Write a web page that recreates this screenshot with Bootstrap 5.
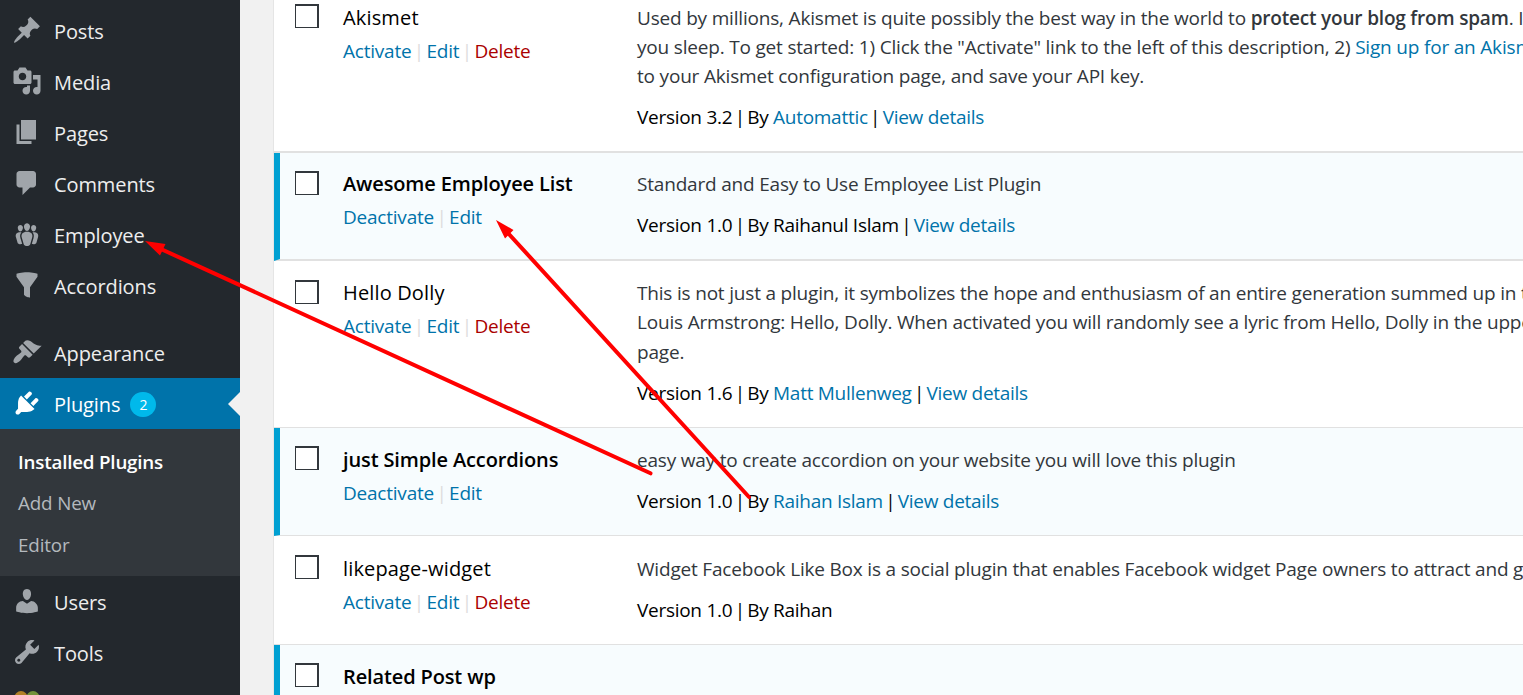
<!DOCTYPE html>
<html lang="en">
<head>
<meta charset="utf-8">
<title>Plugins</title>
<link href="https://cdn.jsdelivr.net/npm/bootstrap@5.3.0/dist/css/bootstrap.min.css" rel="stylesheet">
<style>
body{background:#f1f1f1;font-family:"Open Sans",sans-serif;font-size:19px;line-height:29.25px;color:#000;height:695px;overflow:hidden;letter-spacing:-.22px}
a{color:#0073aa;text-decoration:none}
.side{width:240px;height:695px;background:#23282d;padding-top:6px;overflow:hidden}
.side .item{height:51px;padding-left:12px;gap:12px;color:#eee;font-size:20px;letter-spacing:-.1px;flex:none}
.side .low{padding-top:2px}
.side svg.ico{width:30px;height:30px;fill:#a0a5aa;flex:none;margin-top:-3px}
.side .current{background:#0073aa;color:#fff}
.side .current svg.ico{fill:#fff}
.side .current::after{content:"";position:absolute;right:0;top:14px;border:12px solid transparent;border-left:0;border-right-color:#f1f1f1}
.gap-row{height:15px;flex:none}
.count{width:26px;height:25px;border-radius:13px;background:#00b9eb;font-size:14px;line-height:25px;margin-left:-2px}
.submenu{height:147px;background:#32373c;padding:13px 18px 0;flex:none}
.submenu a{display:block;height:41.4px;line-height:41.4px;color:#b4b9be;font-size:18.8px;letter-spacing:-.15px}
.submenu a.on{color:#fff;font-weight:600;letter-spacing:-.2px}
.plugins{margin-left:33px;border-left:1px solid #e5e5e5;background:#fff;height:695px;overflow:hidden;min-width:0}
.plug{height:108px;padding:17px 0 0 21px;border-bottom:1px solid #e1e1e1;white-space:nowrap;flex:none}
.plug.tall{height:167px}
.plug.first{margin-top:-14px}
.first .desc{margin-top:-.5px}
.plug.edge{border-bottom-width:2px}
.plug.active{background:#f7fcfe;border-left:6px solid #00a0d2;padding-left:15px}
.plug.up{padding-top:16px}
.plug.down{padding-top:18px;height:109px}
.box{width:24px;height:24px;border:2px solid #32373c;border-width:2px 2px 1px 1px;background:#fff;margin-top:1px;flex:none}
.up .box,.dolly .box{margin-top:2px}
.who{width:294px;margin-left:24px;flex:none}
.info{padding-top:1px}
.title{font-size:20px;letter-spacing:.15px}
.active .title{font-weight:600;letter-spacing:-.13px}
.acts{margin-top:4.6px;color:#ddd}
.bar{margin:0 -2.3px}
.del{color:#a00}
.desc{color:#32373c;letter-spacing:-.19px}
.ver{margin-top:12px;letter-spacing:-.28px}
.marks{left:0;top:0;pointer-events:none}
</style>
</head>
<body>
<div class="d-flex">
<nav class="side d-flex flex-column flex-shrink-0">
<div class="item d-flex align-items-center"><svg class="ico" viewBox="0 0 20 20"><path d="M10.44 3.02l1.82-1.82 6.36 6.35-1.83 1.82c-1.05-.68-2.48-.57-3.41.36l-.75.75c-.92.93-1.04 2.35-.35 3.41l-1.83 1.82-2.41-2.41-2.8 2.79c-.42.42-3.38 2.71-3.8 2.29s1.86-3.39 2.28-3.81l2.79-2.79L4.1 9.36l1.83-1.82c1.05.69 2.48.57 3.4-.36l.75-.75c.93-.92 1.05-2.35.36-3.41z"/></svg><span>Posts</span></div>
<div class="item d-flex align-items-center"><svg class="ico" viewBox="0 0 20 20"><path d="M13 11V4c0-.55-.45-1-1-1h-1.67L9 1H5L3.67 3H2c-.55 0-1 .45-1 1v7c0 .55.45 1 1 1h10c.55 0 1-.45 1-1zM7 4.5c1.38 0 2.5 1.12 2.5 2.5S8.38 9.500 7 9.500 4.500 8.380 4.500 7 5.620 4.500 7 4.500zM14 6h5v10.500c0 1.380-1.120 2.500-2.500 2.500S14 17.880 14 16.500s1.120-2.500 2.500-2.500c.17 0 .34.02.5.05V9h-3V6zm-4 8.050V13h2v3.500c0 1.380-1.120 2.500-2.500 2.500S7 17.880 7 16.500 8.120 14 9.500 14c.17 0 .34.02.5.05z"/></svg><span>Media</span></div>
<div class="item d-flex align-items-center"><svg class="ico" viewBox="0 0 20 20"><path d="M6 15V2h10v13H6zm-1 1h8v2H3V5h2v11z"/></svg><span>Pages</span></div>
<div class="item d-flex align-items-center"><svg class="ico" viewBox="0 0 20 20"><path d="M5 2h9c1.100 0 2 .9 2 2v7c0 1.100-.9 2-2 2h-2l-5 5v-5H5c-1.100 0-2-.9-2-2V4c0-1.100.9-2 2-2z"/></svg><span>Comments</span></div>
<div class="item d-flex align-items-center"><svg class="ico" viewBox="0 0 20 20"><path d="M8.030 4.460c-.29 1.280.55 3.460 1.970 3.460 1.410 0 2.250-2.180 1.960-3.460-.22-.98-1.080-1.630-1.960-1.630-.89 0-1.740.65-1.970 1.630zm-4.130.9c-.25 1.080.47 2.930 1.670 2.930s1.920-1.850 1.670-2.930c-.19-.83-.92-1.390-1.670-1.390s-1.480.56-1.670 1.390zm8.860 0c-.25 1.080.47 2.930 1.660 2.930 1.200 0 1.920-1.850 1.670-2.930-.19-.83-.92-1.390-1.670-1.390-.74 0-1.470.56-1.660 1.390zm-.59 11.430l1.250-4.300C14.200 10 12.710 8.470 10 8.470c-2.720 0-4.210 1.530-3.440 4.020l1.260 4.300C8.050 17.510 9 18 10 18c.98 0 1.940-.49 2.170-1.210zm-6.100-7.630c-.49.67-.96 1.830-.42 3.590l1.120 3.790c-.34.2-.77.31-1.200.31-.85 0-1.650-.41-1.850-1.030l-1.070-3.650c-.65-2.110.61-3.400 2.920-3.400.27 0 .54.02.79.06-.1.1-.2.22-.29.33zm8.350-.39c2.310 0 3.580 1.290 2.920 3.400l-1.070 3.650c-.2.62-1 1.030-1.850 1.030-.43 0-.86-.11-1.200-.31l1.110-3.770c.55-1.780.08-2.940-.42-3.610-.08-.11-.18-.23-.28-.33.25-.04.51-.06.79-.06z"/></svg><span>Employee</span></div>
<div class="item d-flex align-items-center"><svg class="ico" viewBox="0 0 20 20"><path d="M3 4.500v-2s3.340-1 7-1 7 1 7 1v2l-5 7.030v6.970s-1.220-.09-2.250-.59S8 16.500 8 16.500v-4.970z"/></svg><span>Accordions</span></div>
<div class="gap-row"></div>
<div class="item low d-flex align-items-center"><svg class="ico" viewBox="0 0 20 20"><path d="M14.480 11.060L7.410 3.990l1.500-1.500c.5-.56 2.300-.47 3.510.32 1.210.8 1.430 1.280 2.910 2.100 1.180.64 2.450 1.260 4.450.85zm-.71.71L6.700 4.700 4.930 6.470c-.39.39-.39 1.020 0 1.410l1.060 1.060c.39.39.39 1.030 0 1.420-.6.6-1.430 1.110-2.210 1.690-.35.26-.7.53-1.010.84C1.430 14.230.4 16.080 1.400 17.070c.99 1 2.840-.03 4.180-1.360.31-.31.58-.66.85-1.020.57-.78 1.080-1.610 1.690-2.210.39-.39 1.020-.39 1.410 0l1.060 1.060c.39.39 1.020.39 1.410 0z"/></svg><span>Appearance</span></div>
<div class="item low current d-flex align-items-center position-relative"><svg class="ico" viewBox="0 0 20 20"><path d="M13.110 4.360L9.870 7.600 8 5.730l3.240-3.240c.35-.34 1.050-.2 1.560.32.52.51.66 1.210.31 1.550zm-8 1.770l.91-1.120 9.010 9.010-1.190.84c-.71.71-2.630 1.160-3.820 1.160H6.140L4.900 17.260c-.59.59-1.540.59-2.120 0-.59-.58-.59-1.530 0-2.120l1.240-1.240v-3.880c0-1.130.4-3.190 1.090-3.890zm7.260 3.970l3.240-3.240c.34-.35 1.040-.21 1.550.31.52.51.66 1.210.31 1.550l-3.240 3.250z"/></svg><span>Plugins</span><span class="count text-center">2</span></div>
<div class="submenu"><a class="on" href="#">Installed Plugins</a><a href="#">Add New</a><a href="#">Editor</a></div>
<div class="item low d-flex align-items-center"><svg class="ico" viewBox="0 0 20 20"><path d="M10 9.250c-2.270 0-2.730-3.440-2.730-3.440C7 4.020 7.820 2 9.970 2c2.160 0 2.980 2.020 2.710 3.810 0 0-.41 3.440-2.680 3.440zm0 2.570L12.720 10c2.390 0 4.520 2.330 4.520 4.530v2.490s-3.650 1.130-7.240 1.130c-3.650 0-7.240-1.130-7.240-1.130v-2.490c0-2.250 1.940-4.480 4.470-4.480z"/></svg><span>Users</span></div>
<div class="item low d-flex align-items-center"><svg class="ico" viewBox="0 0 20 20"><path d="M16.680 9.770c-1.340 1.340-3.300 1.670-4.950.99l-5.410 6.520c-.99.99-2.590.99-3.580 0s-.99-2.590 0-3.570l6.520-5.420c-.68-1.650-.35-3.610.99-4.950 1.280-1.280 3.120-1.620 4.720-1.060l-2.890 2.890 2.820 2.820 2.860-2.870c.53 1.580.18 3.390-1.080 4.650zM3.810 16.210c.4.39 1.040.39 1.430 0 .4-.4.4-1.040 0-1.430-.39-.4-1.030-.4-1.430 0-.39.39-.39 1.030 0 1.430z"/></svg><span>Tools</span></div>
<div class="item d-flex align-items-center"><svg class="ico" viewBox="0 0 30 30"><circle cx="9" cy="10.500" r="6.500" fill="#b08026"/><circle cx="21" cy="10.500" r="6.500" fill="#73913a"/></svg></div>
</nav>
<main class="plugins flex-grow-1">
<div class="plug tall first edge d-flex"><span class="box"></span><div class="who"><div class="title">Akismet</div><div class="acts"><a href="#">Activate</a> <span class="bar">|</span> <a href="#">Edit</a> <span class="bar">|</span> <a class="del" href="#">Delete</a></div></div>
<div class="info"><div class="desc">Used by millions, Akismet is quite possibly the best way in the world to <b class="fw-semibold">protect your blog from spam</b>. It<br>you sleep. To get started: 1) Click the "Activate" link to the left of this description, 2) <a href="#">Sign up for an Akism</a><br>to your Akismet configuration page, and save your API key.</div><div class="ver">Version 3.2 <span class="bar">|</span> By <a href="#">Automattic</a> <span class="bar">|</span> <a href="#">View details</a></div></div></div>
<div class="plug active up edge d-flex"><span class="box"></span><div class="who"><div class="title">Awesome Employee List</div><div class="acts"><a href="#">Deactivate</a> <span class="bar">|</span> <a href="#">Edit</a></div></div>
<div class="info"><div class="desc">Standard and Easy to Use Employee List Plugin</div><div class="ver">Version 1.0 <span class="bar">|</span> By Raihanul Islam <span class="bar">|</span> <a href="#">View details</a></div></div></div>
<div class="plug tall dolly d-flex"><span class="box"></span><div class="who"><div class="title">Hello Dolly</div><div class="acts"><a href="#">Activate</a> <span class="bar">|</span> <a href="#">Edit</a> <span class="bar">|</span> <a class="del" href="#">Delete</a></div></div>
<div class="info"><div class="desc">This is not just a plugin, it symbolizes the hope and enthusiasm of an entire generation summed up in t<br>Louis Armstrong: Hello, Dolly. When activated you will randomly see a lyric from Hello, Dolly in the uppe<br>page.</div><div class="ver">Version 1.6 <span class="bar">|</span> By <a href="#">Matt Mullenweg</a> <span class="bar">|</span> <a href="#">View details</a></div></div></div>
<div class="plug active d-flex"><span class="box"></span><div class="who"><div class="title">just Simple Accordions</div><div class="acts"><a href="#">Deactivate</a> <span class="bar">|</span> <a href="#">Edit</a></div></div>
<div class="info"><div class="desc">easy way to create accordion on your website you will love this plugin</div><div class="ver">Version 1.0 <span class="bar">|</span> By <a href="#">Raihan Islam</a> <span class="bar">|</span> <a href="#">View details</a></div></div></div>
<div class="plug down d-flex"><span class="box"></span><div class="who"><div class="title">likepage-widget</div><div class="acts"><a href="#">Activate</a> <span class="bar">|</span> <a href="#">Edit</a> <span class="bar">|</span> <a class="del" href="#">Delete</a></div></div>
<div class="info"><div class="desc">Widget Facebook Like Box is a social plugin that enables Facebook widget Page owners to attract and g</div><div class="ver">Version 1.0 <span class="bar">|</span> By Raihan</div></div></div>
<div class="plug active d-flex"><span class="box"></span><div class="who"><div class="title">Related Post wp</div></div></div>
</main>
</div>
<svg class="marks position-absolute" width="1523" height="695" fill="#f00" stroke="#f00"><path d="M650.500 473.300L162 249.500M749 497L508 233" fill="none" stroke-width="4" stroke-linecap="round"/><path stroke="none" d="M145 241L165.500 244 160 255.500zM496 220L513.500 230 505 238.500z"/></svg>
<script src="https://cdn.jsdelivr.net/npm/bootstrap@5.3.0/dist/js/bootstrap.bundle.min.js"></script>
</body>
</html>
